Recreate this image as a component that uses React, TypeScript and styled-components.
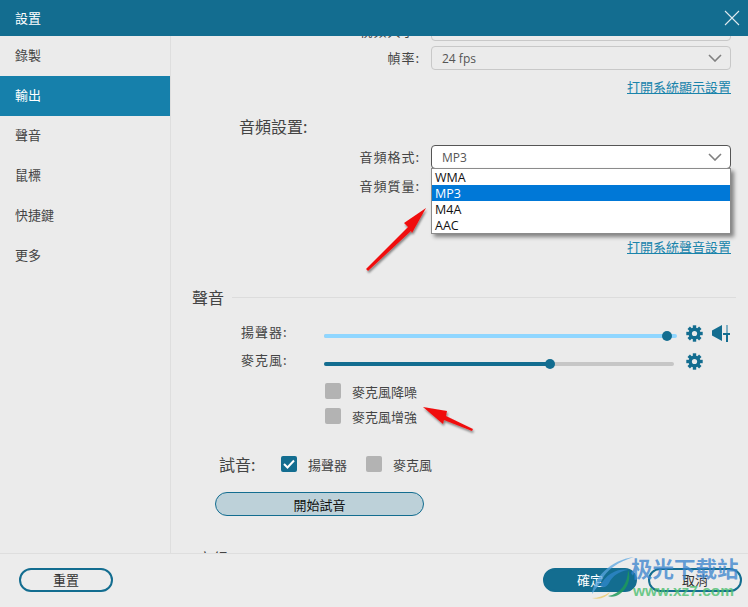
import styled, { createGlobalStyle } from 'styled-components';

const GlobalStyle = createGlobalStyle`
    html, body {
        margin: 0;
        padding: 0;
        background: #ebebeb;
    }
    * {
        box-sizing: border-box;
    }
`;

const Window = styled.div`
    position: relative;
    width: 748px;
    height: 607px;
    display: flex;
    flex-direction: column;
    overflow: hidden;
    background: #ebebeb;
    color: #444;
    font-family: "Noto Sans CJK TC", "Noto Sans", sans-serif;
    font-size: 13px;
`;

const TitleBar = styled.div`
    height: 36px;
    flex: none;
    display: flex;
    align-items: center;
    justify-content: space-between;
    padding: 0 8px 2px 15px;
    background: #136d90;
    color: #fff;
`;

const CloseIcon = styled.svg`
    margin-top: 2px;
`;

const Body = styled.div`
    flex: 1;
    min-height: 0;
    display: flex;
`;

const Sidebar = styled.div`
    width: 171px;
    flex: none;
    border-right: 1px solid #dedede;
`;

const NavItem = styled.div<{ $active?: boolean }>`
    height: 40px;
    display: flex;
    align-items: center;
    padding: 0 0 3px 15px;
    background: ${p => (p.$active ? '#1680ab' : 'transparent')};
    color: ${p => (p.$active ? '#fff' : '#444')};
`;

const Main = styled.div`
    flex: 1;
    min-width: 0;
    overflow: hidden;
`;

const Scroller = styled.div`
    margin-top: -19px;
    padding-right: 17px;
`;

const FieldRow = styled.div<{ $mt?: number }>`
    display: flex;
    align-items: center;
    justify-content: flex-end;
    gap: 11px;
    height: 24px;
    margin-top: ${p => p.$mt ?? 5}px;
`;

const FieldLabel = styled.span<{ $drop?: number }>`
    white-space: nowrap;
    line-height: 18px;
    letter-spacing: 1px;
    margin-top: ${p => p.$drop ?? 0}px;
`;

const SelectWrap = styled.div`
    position: relative;
    width: 300px;
`;

const SelectBox = styled.div<{ $open?: boolean }>`
    height: 24px;
    display: flex;
    align-items: center;
    justify-content: space-between;
    padding: 0 8px 0 10px;
    border: 1px solid ${p => (p.$open ? '#555' : '#c8c8c8')};
    border-radius: 4px;
    background: ${p => (p.$open ? '#fff' : 'transparent')};
    font-family: "Open Sans", sans-serif;
    font-size: 12px;
    color: #555;
`;

const Menu = styled.div`
    position: absolute;
    top: 23px;
    left: 0;
    width: 300px;
    z-index: 2;
    background: #fff;
    border: 1px solid #8b8b8b;
    box-shadow: 3px 3px 4px rgba(0, 0, 0, 0.45);
`;

const MenuItem = styled.div<{ $selected?: boolean }>`
    height: 16px;
    line-height: 18px;
    padding-left: 3px;
    overflow: hidden;
    font-family: "Open Sans", sans-serif;
    font-size: 12.5px;
    background: ${p => (p.$selected ? '#0078d7' : 'transparent')};
    color: ${p => (p.$selected ? '#fff' : '#111')};
`;

const LinkRow = styled.div<{ $mt: number }>`
    display: flex;
    justify-content: flex-end;
    margin-top: ${p => p.$mt}px;
`;

const SysLink = styled.a`
    color: #1a84ab;
    line-height: 16px;
    text-decoration: underline;
`;

const SubTitle = styled.div`
    margin: 21px 0 0 68px;
    height: 20px;
    line-height: 20px;
    font-size: 16px;
`;

const SectionHead = styled.div`
    display: flex;
    align-items: center;
    gap: 8px;
    margin: 32px -5px 0 21px;
    height: 20px;
    font-size: 16px;
`;

const SectionLine = styled.div`
    flex: 1;
    height: 1px;
    background: #dcdcdc;
`;

const SliderRow = styled.div<{ $mt: number }>`
    display: flex;
    align-items: center;
    height: 20px;
    margin-top: ${p => p.$mt}px;
    padding-left: 70px;
`;

const SliderLabel = styled.span`
    width: 83px;
    flex: none;
    margin-top: -8px;
    letter-spacing: 1px;
`;

const Track = styled.div`
    position: relative;
    width: 350px;
    height: 4px;
    flex: none;
    border-radius: 2px;
    background: #c6c6c6;
    margin-top: 2px;
`;

const TrackFill = styled.div<{ $color: string }>`
    height: 4px;
    border-radius: 2px;
    background: ${p => p.$color};
`;

const Thumb = styled.div`
    position: absolute;
    top: -3px;
    width: 10px;
    height: 10px;
    margin-left: -5px;
    border-radius: 50%;
    background: #136d90;
`;

const IconGroup = styled.div`
    display: flex;
    align-items: center;
    gap: 9px;
    margin: -4px 0 0 12px;
`;

const CheckRow = styled.div<{ $mt: number }>`
    display: flex;
    align-items: center;
    gap: 11px;
    height: 16px;
    margin: ${p => p.$mt}px 0 0 154px;
`;

const Check = styled.div<{ $on?: boolean }>`
    width: 16px;
    height: 16px;
    flex: none;
    display: flex;
    align-items: center;
    justify-content: center;
    border-radius: 2px;
    background: ${p => (p.$on ? '#136d90' : '#b3b3b3')};
`;

const TestRow = styled.div`
    display: flex;
    align-items: center;
    height: 16px;
    margin: 32px 0 0 48px;
`;

const TestLabel = styled.span`
    width: 62px;
    flex: none;
    font-size: 16px;
`;

const TestOption = styled.div`
    display: flex;
    align-items: center;
    gap: 11px;
    width: 85px;
`;

const TestButton = styled.div`
    width: 209px;
    height: 24px;
    margin: 20px 0 0 44px;
    display: flex;
    align-items: center;
    justify-content: center;
    border: 1px solid #136d90;
    border-radius: 12px;
    background: #bdd1d9;
    color: #111;
`;

const ClippedTitle = styled.div`
    margin: 32px 0 0 26px;
    font-size: 16px;
    line-height: 20px;
`;

const Footer = styled.div`
    height: 54px;
    flex: none;
    display: flex;
    align-items: center;
    gap: 11px;
    padding: 0 6px 2px 19px;
    border-top: 1px solid #dedede;
    background: #ececec;
    position: relative;
`;

const PillButton = styled.div<{ $primary?: boolean }>`
    width: 94px;
    height: 24px;
    display: flex;
    align-items: center;
    justify-content: center;
    padding-bottom: 1px;
    border: 2px solid #136d90;
    border-radius: 12px;
    background: ${p => (p.$primary ? '#136d90' : 'transparent')};
    color: ${p => (p.$primary ? '#fff' : '#333')};
`;

const Spacer = styled.div`
    flex: 1;
`;

const ArrowLayer = styled.svg`
    position: absolute;
    inset: 0;
    z-index: 3;
    pointer-events: none;
`;

const WatermarkLogo = styled.svg`
    position: absolute;
    left: 590px;
    top: 556px;
    z-index: 4;
`;

const WatermarkName = styled.div`
    position: absolute;
    left: 631px;
    top: 553px;
    z-index: 4;
    font-family: "Noto Sans CJK SC", sans-serif;
    font-size: 21.5px;
    font-weight: 700;
    line-height: 30px;
    color: rgba(62, 134, 206, 0.8);
`;

const WatermarkUrl = styled.div`
    position: absolute;
    left: 633px;
    top: 582px;
    z-index: 4;
    font-family: "Liberation Sans", sans-serif;
    font-size: 15.5px;
    font-weight: 700;
    line-height: 18px;
    color: rgba(74, 190, 110, 0.8);
`;

function Chevron() {
    return (
        <svg width="14" height="8" viewBox="0 0 14 8" fill="none">
            <path d="M1 1l6 6 6-6" stroke="#808080" strokeWidth="1.6" />
        </svg>
    );
}

function Gear() {
    const teeth = [0, 45, 90, 135, 180, 225, 270, 315];
    return (
        <svg width="17" height="17" viewBox="0 0 17 17">
            {teeth.map((angle) => (
                <rect key={angle} x="6.8" y="0.3" width="3.4" height="4" fill="#136d90" transform={`rotate(${angle} 8.5 8.5)`} />
            ))}
            <circle cx="8.5" cy="8.5" r="6" fill="#136d90" />
            <circle cx="8.5" cy="8.5" r="2.6" fill="#ebebeb" />
        </svg>
    );
}

function VolumeIcon() {
    return (
        <svg width="19" height="17" viewBox="0 0 19 17">
            <path d="M0 5.5L10 0v16L0 10.5z" fill="#136d90" />
            <rect x="14" y="0" width="2" height="8" fill="#7fb0c4" />
            <rect x="14" y="8" width="2" height="9" fill="#136d90" />
            <rect x="11" y="8" width="7" height="2" fill="#136d90" />
        </svg>
    );
}

function App() {
    return (
        <Window>
            <GlobalStyle />
            <TitleBar>
                <span>設置</span>
                <CloseIcon width="16" height="16" viewBox="0 0 16 16" fill="none">
                    <path d="M1 1l14 14M15 1L1 15" stroke="#dfe9ee" strokeWidth="1.1" />
                </CloseIcon>
            </TitleBar>
            <Body>
                <Sidebar>
                    <NavItem>錄製</NavItem>
                    <NavItem $active>輸出</NavItem>
                    <NavItem>聲音</NavItem>
                    <NavItem>鼠標</NavItem>
                    <NavItem>快捷鍵</NavItem>
                    <NavItem>更多</NavItem>
                </Sidebar>
                <Main>
                    <Scroller>
                        <FieldRow $mt={0}>
                            <FieldLabel $drop={4}>視頻大小:</FieldLabel>
                            <SelectWrap><SelectBox /></SelectWrap>
                        </FieldRow>
                        <FieldRow>
                            <FieldLabel>幀率:</FieldLabel>
                            <SelectWrap>
                                <SelectBox>24 fps<Chevron /></SelectBox>
                            </SelectWrap>
                        </FieldRow>
                        <LinkRow $mt={9}>
                            <SysLink>打開系統顯示設置</SysLink>
                        </LinkRow>
                        <SubTitle>音頻設置:</SubTitle>
                        <FieldRow $mt={9}>
                            <FieldLabel>音頻格式:</FieldLabel>
                            <SelectWrap>
                                <SelectBox $open>MP3<Chevron /></SelectBox>
                                <Menu>
                                    <MenuItem>WMA</MenuItem>
                                    <MenuItem $selected>MP3</MenuItem>
                                    <MenuItem>M4A</MenuItem>
                                    <MenuItem>AAC</MenuItem>
                                </Menu>
                            </SelectWrap>
                        </FieldRow>
                        <FieldRow>
                            <FieldLabel>音頻質量:</FieldLabel>
                            <SelectWrap><SelectBox /></SelectWrap>
                        </FieldRow>
                        <LinkRow $mt={41}>
                            <SysLink>打開系統聲音設置</SysLink>
                        </LinkRow>
                        <SectionHead>
                            聲音
                            <SectionLine />
                        </SectionHead>
                        <SliderRow $mt={18}>
                            <SliderLabel>揚聲器:</SliderLabel>
                            <Track>
                                <TrackFill $color="#8fd6ff" style={{ width: 353 }} />
                                <Thumb style={{ left: 343 }} />
                            </Track>
                            <IconGroup>
                                <Gear />
                                <VolumeIcon />
                            </IconGroup>
                        </SliderRow>
                        <SliderRow $mt={8}>
                            <SliderLabel>麥克風:</SliderLabel>
                            <Track>
                                <TrackFill $color="#136d90" style={{ width: 226 }} />
                                <Thumb style={{ left: 226 }} />
                            </Track>
                            <IconGroup>
                                <Gear />
                            </IconGroup>
                        </SliderRow>
                        <CheckRow $mt={10}>
                            <Check />
                            麥克風降噪
                        </CheckRow>
                        <CheckRow $mt={9}>
                            <Check />
                            麥克風增強
                        </CheckRow>
                        <TestRow>
                            <TestLabel>試音:</TestLabel>
                            <TestOption>
                                <Check $on>
                                    <svg width="12" height="10" viewBox="0 0 12 10" fill="none">
                                        <path d="M1 5l3.5 3.5L11 1.5" stroke="#fff" strokeWidth="2" />
                                    </svg>
                                </Check>
                                揚聲器
                            </TestOption>
                            <TestOption>
                                <Check />
                                麥克風
                            </TestOption>
                        </TestRow>
                        <TestButton>開始試音</TestButton>
                        <ClippedTitle>高級</ClippedTitle>
                    </Scroller>
                </Main>
            </Body>
            <Footer>
                <PillButton>重置</PillButton>
                <Spacer />
                <PillButton $primary>確定</PillButton>
                <PillButton>取消</PillButton>
            </Footer>

            <ArrowLayer width="748" height="607" viewBox="0 0 748 607">
                <defs>
                    <filter id="arrowShadow" x="-30%" y="-30%" width="160%" height="160%">
                        <feDropShadow dx="1" dy="2" stdDeviation="1.2" floodColor="#000" floodOpacity="0.45" />
                    </filter>
                </defs>
                <path d="M426 208L404 223 408 227 366 269 368 271 411 231 412 233z" fill="#f01010" filter="url(#arrowShadow)" />
                <path d="M423 407L447 411 446 416 473 429 472 431 444 420 443 424z" fill="#f01010" filter="url(#arrowShadow)" />
            </ArrowLayer>

            <WatermarkLogo width="44" height="44" viewBox="0 0 44 44">
                <path d="M2 38C4 22 20 4 44 1 28 6 16 14 12 24 8 30 5 34 2 38z" fill="#5aa5e0" fillOpacity="0.75" />
                <path d="M10 30C16 18 28 12 38 14 30 15 22 20 19 27 16 32 13 32 10 30z" fill="#2f86c8" fillOpacity="0.8" />
                <path d="M18 40C30 38 38 28 38 14 42 24 36 36 26 40 23 41 20 41 18 40z" fill="#1f9a5a" fillOpacity="0.85" />
                <path d="M2 42C8 42 14 40 20 36 17 41 10 44 2 42z" fill="#e8c860" fillOpacity="0.75" />
            </WatermarkLogo>
            <WatermarkName>极光下载站</WatermarkName>
            <WatermarkUrl>www.xz7.com</WatermarkUrl>
        </Window>
    );
}

export default App;
